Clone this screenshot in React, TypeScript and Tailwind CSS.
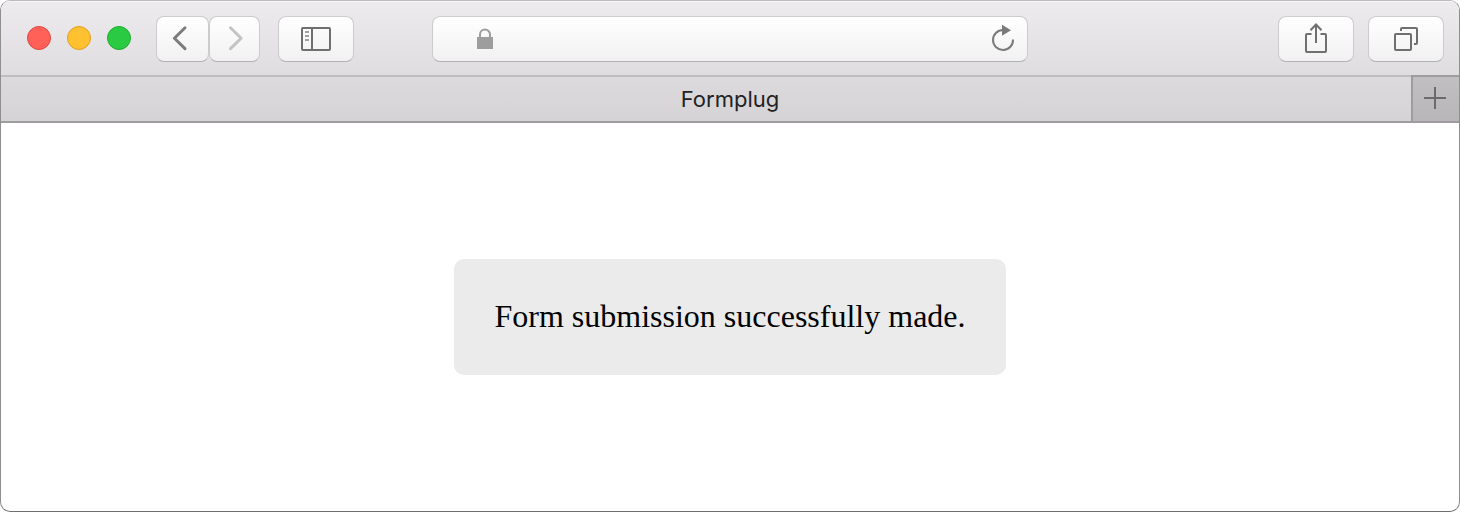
import type { ReactNode } from "react";

const toolButton =
  "flex h-[46px] items-center justify-center rounded-lg border border-[#cdcbce] border-b-[#b3b1b3] bg-linear-to-b from-white to-[#f1f1f1]";

function ToolButton({ label, width, disabled, children }: { label: string; width: string; disabled?: boolean; children: ReactNode }) {
  return (
    <button type="button" aria-label={label} disabled={disabled} className={`${toolButton} ${width}`}>
      {children}
    </button>
  );
}

function TrafficLights() {
  return (
    <div className="flex h-11 items-center gap-4 self-start">
      <button type="button" aria-label="Close" className="size-6 rounded-full border border-[#e2463f] bg-[#ff6159]" />
      <button type="button" aria-label="Minimize" className="size-6 rounded-full border border-[#dfa023] bg-[#ffc12f]" />
      <button type="button" aria-label="Zoom" className="size-6 rounded-full border border-[#1dad2b] bg-[#2acb42]" />
    </div>
  );
}

function Toolbar() {
  return (
    <header className="grid grid-cols-[1fr_minmax(0,596px)_1fr] items-center border-b-2 border-[#bfbdc0] bg-linear-to-b from-[#eeebef] to-[#dfdde0] px-[15px] pt-[15px] pb-[13px] shadow-[inset_0_1px_0_#f7f5f8]">
      <div className="flex items-center pl-[11px]">
        <TrafficLights />
        <div className="ml-[25px] flex">
          <ToolButton label="Back" width="w-[53px]">
            <svg width="51" height="44" viewBox="0 0 51 44" fill="none" stroke="#7c7c7c" strokeWidth="3" strokeLinecap="round" strokeLinejoin="round">
              <path d="M28 10.8 17.4 21.2 28 31.6" />
            </svg>
          </ToolButton>
          <ToolButton label="Forward" width="w-[51px]" disabled>
            <svg width="49" height="44" viewBox="0 0 49 44" fill="none" stroke="#c3c3c3" strokeWidth="3" strokeLinecap="round" strokeLinejoin="round">
              <path d="M20.5 10.8 31.1 21.2 20.5 31.6" />
            </svg>
          </ToolButton>
        </div>
        <div className="ml-[18px]">
          <ToolButton label="Show sidebar" width="w-[76px]">
            <svg width="74" height="44" viewBox="0 0 74 44" fill="none" stroke="#6f6f6f" strokeWidth="2">
              <rect x="23" y="11" width="28" height="22" rx="1" />
              <path d="M33 11v22" />
              <path d="M26 15h4M26 19h4M26 23h4" stroke="#a0a0a0" />
            </svg>
          </ToolButton>
        </div>
      </div>

      <form className="flex h-[46px] items-center rounded-lg border border-[#cdcbce] border-b-[#b3b1b3] bg-linear-to-b from-white to-[#f1f1f1]">
        <label htmlFor="address" aria-label="Address" className="pl-11">
          <svg width="16" height="44" viewBox="0 0 16 44">
            <rect y="20" width="16" height="12" fill="#9d9d9d" />
            <path d="M3 20v-2.5a5 5 0 0 1 10 0V20" fill="none" stroke="#9d9d9d" strokeWidth="2" />
          </svg>
        </label>
        <input id="address" type="text" className="h-10 min-w-0 flex-1 bg-transparent px-3 text-xl outline-none" />
        <button type="button" aria-label="Reload" className="pr-2">
          <svg width="32" height="44" viewBox="0 0 32 44">
            <path d="M26 22.5A10 10 0 1 1 16 13" fill="none" stroke="#7a7a7a" strokeWidth="2" />
            <path d="M15 7.8v11l9-5.5z" fill="#7a7a7a" />
          </svg>
        </button>
      </form>

      <div className="flex justify-end gap-[14px]">
        <ToolButton label="Share" width="w-[76px]">
          <svg width="74" height="44" viewBox="0 0 74 44" fill="none" stroke="#6f6f6f" strokeWidth="2">
            <path d="M32.5 17H28a1 1 0 0 0-1 1v16a1 1 0 0 0 1 1h18a1 1 0 0 0 1-1V18a1 1 0 0 0-1-1h-4.5" />
            <path d="M37 26V7.500M31.500 13.300 37 7.500l5.500 5.800" />
          </svg>
        </ToolButton>
        <ToolButton label="Show all tabs" width="w-[76px]">
          <svg width="74" height="44" viewBox="0 0 74 44" fill="none" stroke="#6f6f6f" strokeWidth="2">
            <rect x="26" y="17" width="16" height="16" rx="1" />
            <path d="M32 14v-2a1 1 0 0 1 1-1h14a1 1 0 0 1 1 1v14a1 1 0 0 1-1 1h-2" />
          </svg>
        </ToolButton>
      </div>
    </header>
  );
}

function TabBar() {
  return (
    <nav aria-label="Tabs" className="flex h-[46px]">
      <button
        type="button"
        className="min-w-0 flex-1 border-b-2 border-[#9f9ca0] bg-linear-to-b from-[#dcdadd] to-[#d5d3d6] pl-12 text-center [font-family:Inter,sans-serif] text-[22px] leading-[44px] text-[#222222]"
      >
        Formplug
      </button>
      <button
        type="button"
        aria-label="New tab"
        className="-mt-[2px] w-12 border-t-2 border-b-2 border-l-2 border-[#9f9ca0] bg-linear-to-b from-[#c1bfc2] to-[#b9b6ba]"
      >
        <svg width="44" height="44" viewBox="0 0 44 44" stroke="#6b696b" strokeWidth="2">
          <path d="M22 10v22M11 21h22" />
        </svg>
      </button>
    </nav>
  );
}

export default function App() {
  return (
    <div className="flex min-h-screen flex-col overflow-hidden rounded-[10px] border border-t-[#bdbbbd] border-r-[#8f8f8f] border-b-[#6f6f6f] border-l-[#8f8f8f] bg-white">
      <Toolbar />
      <TabBar />
      <main className="flex flex-1 items-center justify-center">
        <p className="rounded-[10px] bg-[#ebebeb] px-10 pt-10 pb-[42px] [font-family:'Liberation_Serif',serif] text-[32px] leading-[34px] text-black">
          Form submission successfully made.
        </p>
      </main>
    </div>
  );
}
